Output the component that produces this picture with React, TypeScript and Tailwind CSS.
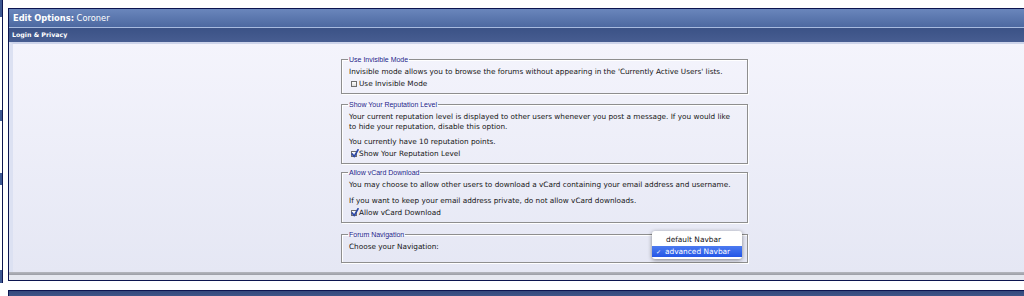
import React from "react";

const CheckBox = ({ checked }: { checked?: boolean }) => (
  <span className="relative inline-block w-[6px] h-[6px] border border-[#6e6e6e] bg-gradient-to-b from-white to-[#dcdcdc] shrink-0">
    {checked && (
      <svg className="absolute left-[-1px] top-[-3px] w-[8px] h-[9px]" viewBox="0 0 8 9">
        <path d="M1.2 5 L3.2 7.6 L7 0.8" stroke="#2b47a6" strokeWidth="1.7" fill="none" strokeLinecap="round" strokeLinejoin="round" />
      </svg>
    )}
  </span>
);

const Legend = ({ children }: { children: React.ReactNode }) => (
  <legend className="ml-[-1px] px-[1px] text-[7px] leading-[7px] text-[#1d1d8a] font-['Liberation_Sans',sans-serif]">
    {children}
  </legend>
);

const fs =
  "border border-[#8e8e8e] shadow-[inset_1px_1px_0_#ffffff,1px_1px_0_#ffffff] px-[7px] pt-[4px] pb-[3px] m-0";

export default function App() {
  return (
    <div className="w-[1024px] h-[296px] bg-white overflow-hidden flex font-['DejaVu_Sans',Verdana,sans-serif] text-[#161616]">
      {/* left edge of neighbouring panel */}
      <div className="w-[8px] shrink-0 flex">
        <div className="w-[2px] flex flex-col">
          <div className="h-[17px] bg-[#3d5892]" />
          <div className="h-[93px]" />
          <div className="h-[11px] bg-[#3d5892]" />
          <div className="h-[52px]" />
          <div className="h-[12px] bg-[#3d5892]" />
          <div className="h-[85px]" />
          <div className="h-[13px] bg-[#3d5892]" />
        </div>
        <div className="w-[1px] h-[283px] bg-[#0d1650]" />
      </div>

      <div className="flex-1 flex flex-col">
        <div className="h-[8px]" />
        <div className="border-l border-t border-b border-[#0c1550] flex flex-col">
          <div className="h-[18px] bg-gradient-to-b from-[#6a86bc] to-[#4d69a1] flex items-center pl-[4px] text-white text-[8.3px]">
            <span className="font-bold">Edit Options:</span>
            <span>&nbsp;Coroner</span>
          </div>
          <div className="h-[1px] bg-[#a8bbdf]" />
          <div className="h-[14px] bg-gradient-to-b from-[#3b5286] to-[#475d91] flex items-center pl-[3px] text-white font-bold text-[6.3px]">
            Login &amp; Privacy
          </div>
          <div className="relative h-[230px] border-t-2 border-[#cdd4ea] border-l-4 border-l-[#dce1f2] bg-gradient-to-b from-[#f4f4fc] to-[#e5e7f4] pl-[328px] pt-[12px]">
            <div className="w-[407px] flex flex-col gap-[6px] text-[7.3px] leading-[10px]">
              <fieldset className={fs}>
                <Legend>Use Invisible Mode</Legend>
                <p>Invisible mode allows you to browse the forums without appearing in the 'Currently Active Users' lists.</p>
                <label className="h-[12px] flex items-center gap-[2px] pl-[2px] mt-[1px]">
                  <CheckBox />
                  <span>Use Invisible Mode</span>
                </label>
              </fieldset>

              <fieldset className={fs + " mt-[1px]"}>
                <Legend>Show Your Reputation Level</Legend>
                <p className="whitespace-nowrap">
                  Your current reputation level is displayed to other users whenever you post a message. If you would like
                  <br />
                  to hide your reputation, disable this option.
                </p>
                <p className="mt-[5px]">You currently have 10 reputation points.</p>
                <label className="h-[12px] flex items-center gap-[2px] pl-[2px] mt-[1px]">
                  <CheckBox checked />
                  <span>Show Your Reputation Level</span>
                </label>
              </fieldset>

              <fieldset className={fs + " mt-[-1px]"}>
                <Legend>Allow vCard Download</Legend>
                <p>You may choose to allow other users to download a vCard containing your email address and username.</p>
                <p className="mt-[6px]">If you want to keep your email address private, do not allow vCard downloads.</p>
                <label className="h-[12px] flex items-center gap-[2px] pl-[2px] mt-[1px]">
                  <CheckBox checked />
                  <span>Allow vCard Download</span>
                </label>
              </fieldset>

              <fieldset className={fs + " h-[32px] mt-[2px]"}>
                <Legend>Forum Navigation</Legend>
                <p>Choose your Navigation:</p>
              </fieldset>
            </div>

            {/* open select menu */}
            <div className="absolute left-[639px] top-[187px] w-[90px] h-[28px] bg-white rounded-[3px] shadow-[0_1px_4px_rgba(0,0,0,0.45)] flex flex-col pt-[3px] text-[7.4px] leading-[10px] text-[#111]">
              <div className="h-[11px] pl-[14px] flex items-center">default Navbar</div>
              <div className="h-[11px] mt-[1px] bg-gradient-to-b from-[#4c7af0] to-[#2456e6] text-white flex items-center">
                <span className="w-[12px] pl-[4px] text-[6px]">✓</span>
                <span className="pl-[1px]">advanced Navbar</span>
              </div>
            </div>
          </div>
          <div className="h-[3px] bg-gradient-to-b from-[#b4b6bd] to-[#9c9ea6]" />
          <div className="h-[5px] bg-[#e6e8f0]" />
        </div>
        <div className="h-[9px]" />
        <div className="flex-1 border-l border-t border-[#0c1550] bg-gradient-to-b from-[#33497c] to-[#3e5587]" />
      </div>
    </div>
  );
}
